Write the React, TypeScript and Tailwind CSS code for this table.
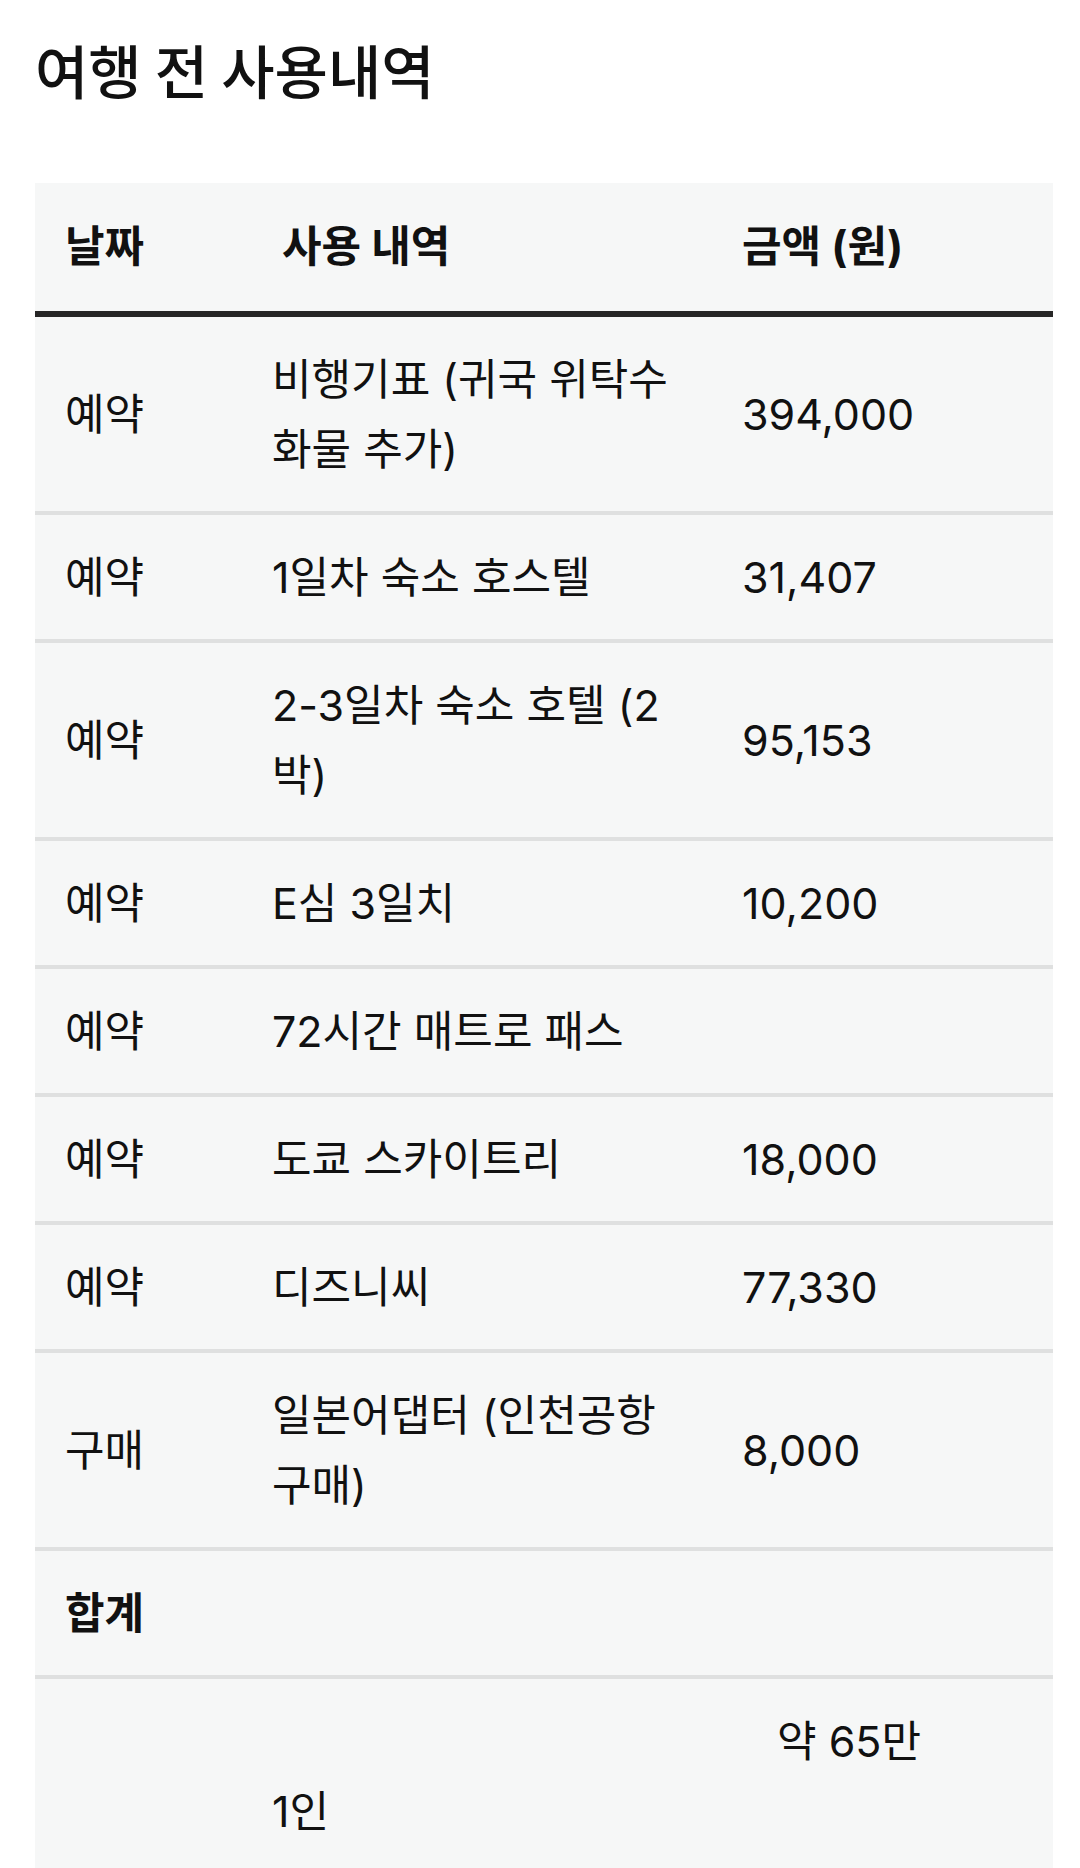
import React from "react"

type Row = {
  date: string
  item: string[]
  amount: string[]
  amountPad?: string
  bold?: boolean
}

const rows: Row[] = [
  { date: "예약", item: ["비행기표 (귀국 위탁수", "화물 추가)"], amount: ["394,000"] },
  { date: "예약", item: ["1일차 숙소 호스텔"], amount: ["31,407"] },
  { date: "예약", item: ["2-3일차 숙소 호텔 (2", "박)"], amount: ["95,153"] },
  { date: "예약", item: ["E심 3일치"], amount: ["10,200"] },
  { date: "예약", item: ["72시간 매트로 패스"], amount: [""] },
  { date: "예약", item: ["도쿄 스카이트리"], amount: ["18,000"] },
  { date: "예약", item: ["디즈니씨"], amount: ["77,330"] },
  { date: "구매", item: ["일본어댑터 (인천공항", "구매)"], amount: ["8,000"] },
  { date: "합계", item: [""], amount: [""], bold: true },
  { date: "", item: ["", "1인"], amount: ["약 65만", ""], amountPad: "pl-[65px]" },
]

function Lines({ lines }: { lines: string[] }) {
  return (
    <div className="whitespace-nowrap">
      {lines.map((l, i) => (
        <div key={i}>{l === "" ? "\u00a0" : l}</div>
      ))}
    </div>
  )
}

export default function App() {
  return (
    <div className="min-h-screen bg-white text-[#111] font-['Inter','Noto_Sans_CJK_KR',sans-serif]">
      <div className="pl-[35px] pr-[27px]">
        <h1 className="pt-[30px] text-[58px] font-medium leading-[78px] font-['Noto_Sans_CJK_KR',sans-serif]">
          여행 전 사용내역
        </h1>

        <div className="mt-[75px] bg-[#f6f7f7] text-[43px] leading-[70px]">
          <div className="grid grid-cols-[207px_470px_1fr] border-b-[6px] border-[#262626] font-bold">
            <div className="pl-[30px] pt-[28px] pb-[30px]">날짜</div>
            <div className="pl-[40px] pt-[28px] pb-[30px]">사용 내역</div>
            <div className="pl-[30px] pt-[28px] pb-[30px]">금액 (원)</div>
          </div>

          {rows.map((r, i) => (
            <div
              key={i}
              className={`grid grid-cols-[207px_470px_1fr] items-center border-b-4 border-[#dfe0e0] ${r.bold ? "font-bold" : "font-normal"}`}
            >
              <div className="pl-[30px] py-[27px]">{r.date || "\u00a0"}</div>
              <div className="pl-[30px] py-[27px]">
                <Lines lines={r.item} />
              </div>
              <div className={`py-[27px] ${r.amountPad ?? "pl-[30px]"}`}>
                <Lines lines={r.amount} />
              </div>
            </div>
          ))}
        </div>
      </div>
    </div>
  )
}
